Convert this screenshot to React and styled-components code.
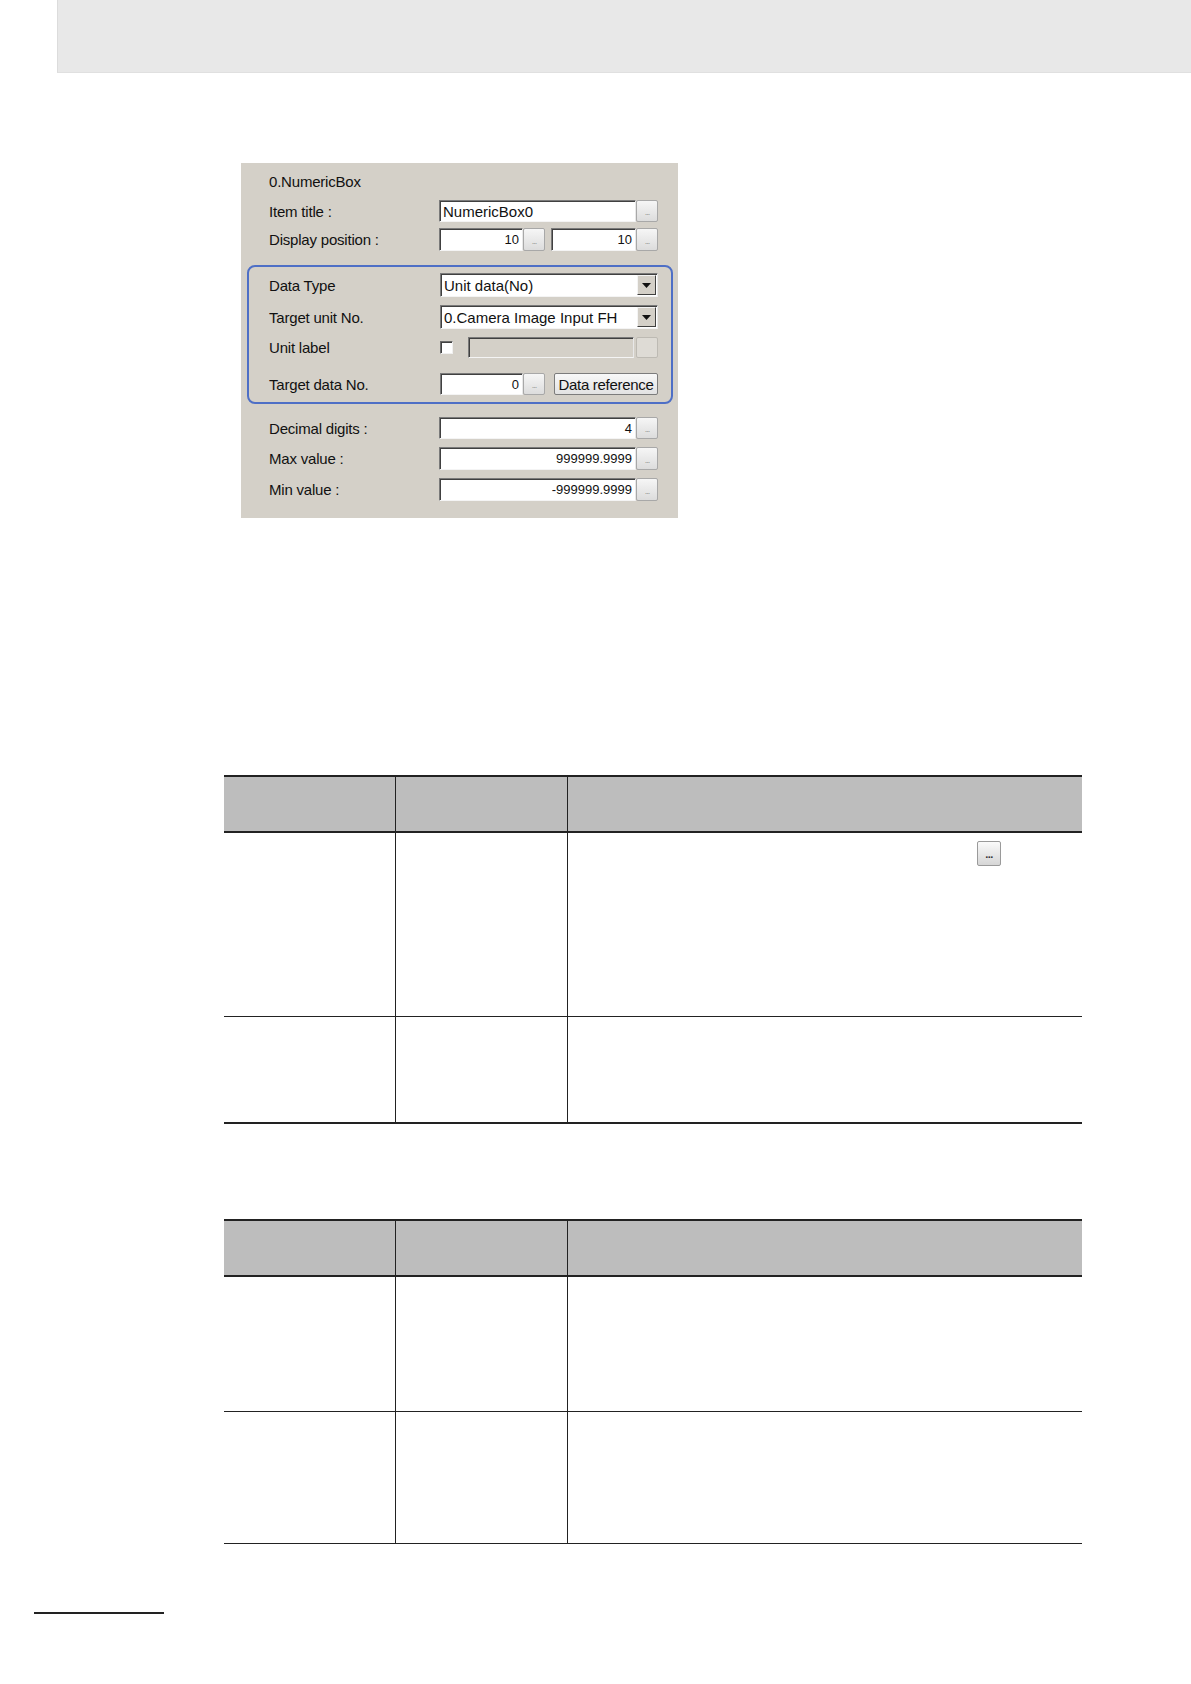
import styled, { createGlobalStyle } from 'styled-components';

const GlobalStyle = createGlobalStyle`
    html, body {
        margin: 0;
        padding: 0;
        background: #ffffff;
        font-family: 'Liberation Sans', Arial, sans-serif;
    }
`;

export default function App() {
    return (
        <>
            <GlobalStyle />
            <Page>
                <TopBand />

                <Panel>
                    <Row $h={22} $mt={0}>
                        <Label>0.NumericBox</Label>
                    </Row>
                    <Row $h={22} $mt={8}>
                        <Label>Item title :</Label>
                        <Controls>
                            <Field $grow>NumericBox0</Field>
                            <DotBtn />
                        </Controls>
                    </Row>
                    <Row $h={23} $mt={6}>
                        <Label>Display position :</Label>
                        <Controls>
                            <Field $w={84} $right $small>10</Field>
                            <DotBtn />
                            <Spacer $w={6} />
                            <Field $grow $right $small>10</Field>
                            <DotBtn />
                        </Controls>
                    </Row>

                    <Group>
                        <Row $h={24} $mt={0}>
                            <Label $w={171}>Data Type</Label>
                            <Select>
                                <span>Unit data(No)</span>
                                <Arrow />
                            </Select>
                        </Row>
                        <Row $h={24} $mt={8}>
                            <Label $w={171}>Target unit No.</Label>
                            <Select>
                                <span>0.Camera Image Input FH</span>
                                <Arrow />
                            </Select>
                        </Row>
                        <Row $h={21} $mt={8}>
                            <Label $w={171}>Unit label</Label>
                            <Controls>
                                <Check />
                                <Spacer $w={15} />
                                <Field $grow $disabled />
                                <Spacer $w={2} />
                                <GhostBtn />
                            </Controls>
                        </Row>
                        <Row $h={22} $mt={15}>
                            <Label $w={171}>Target data No.</Label>
                            <Controls>
                                <Field $w={83} $right $small>0</Field>
                                <DotBtn />
                                <Spacer $w={9} />
                                <PushBtn>Data reference</PushBtn>
                            </Controls>
                        </Row>
                    </Group>

                    <Row $h={22} $mt={13}>
                        <Label>Decimal digits :</Label>
                        <Controls>
                            <Field $grow $right $small>4</Field>
                            <DotBtn />
                        </Controls>
                    </Row>
                    <Row $h={23} $mt={8}>
                        <Label>Max value :</Label>
                        <Controls>
                            <Field $grow $right $small>999999.9999</Field>
                            <DotBtn />
                        </Controls>
                    </Row>
                    <Row $h={23} $mt={8}>
                        <Label>Min value :</Label>
                        <Controls>
                            <Field $grow $right $small>-999999.9999</Field>
                            <DotBtn />
                        </Controls>
                    </Row>
                </Panel>

                <Table $mt={257} $thickEnd>
                    <HeadRow>
                        <Cell />
                        <Cell />
                        <Cell />
                    </HeadRow>
                    <BodyRow $h={183}>
                        <Cell />
                        <Cell />
                        <Cell>
                            <InlineDots>...</InlineDots>
                        </Cell>
                    </BodyRow>
                    <BodyRow $h={105} $line>
                        <Cell />
                        <Cell />
                        <Cell />
                    </BodyRow>
                </Table>

                <Table $mt={95}>
                    <HeadRow>
                        <Cell />
                        <Cell />
                        <Cell />
                    </HeadRow>
                    <BodyRow $h={134}>
                        <Cell />
                        <Cell />
                        <Cell />
                    </BodyRow>
                    <BodyRow $h={131} $line>
                        <Cell />
                        <Cell />
                        <Cell />
                    </BodyRow>
                </Table>

                <FootRule />
            </Page>
        </>
    );
}

function DotBtn() {
    return <SmallBtn>...</SmallBtn>;
}

function Arrow() {
    return (
        <ArrowBtn>
            <svg width="9" height="5" viewBox="0 0 9 5">
                <path d="M0 0 H9 L4.5 5 Z" fill="#111" />
            </svg>
        </ArrowBtn>
    );
}

const Page = styled.div`
    width: 1191px;
    min-height: 1684px;
    overflow: hidden;
`;

const TopBand = styled.div`
    margin-left: 57px;
    height: 73px;
    background: #e8e8e8;
    border-left: 1px solid #dcdcdc;
    border-bottom: 1px solid #e0e0e0;
    box-sizing: border-box;
`;

const Panel = styled.div`
    margin: 90px 0 0 241px;
    width: 437px;
    box-sizing: border-box;
    padding: 7px 20px 17px 28px;
    background: #d4d0c8;
    font-size: 15px;
    color: #111;
`;

const Row = styled.div`
    display: flex;
    align-items: center;
    height: ${props => props.$h}px;
    margin-top: ${props => props.$mt}px;
`;

const Label = styled.div`
    width: ${props => props.$w || 170}px;
    flex-shrink: 0;
    white-space: nowrap;
    letter-spacing: -0.2px;
`;

const Controls = styled.div`
    display: flex;
    align-items: stretch;
    flex: 1;
    height: 100%;
`;

const Spacer = styled.div`
    width: ${props => props.$w}px;
    flex-shrink: 0;
`;

const Field = styled.div`
    box-sizing: border-box;
    ${props => props.$grow ? 'flex: 1;' : `width: ${props.$w}px; flex-shrink: 0;`}
    height: 100%;
    display: flex;
    align-items: center;
    justify-content: ${props => props.$right ? 'flex-end' : 'flex-start'};
    padding: 0 3px;
    background: ${props => props.$disabled ? '#d4d0c8' : '#ffffff'};
    border-top: 1px solid #7a7a7a;
    border-left: 1px solid #7a7a7a;
    border-bottom: 1px solid #f4f4f4;
    border-right: 1px solid #e8e8e8;
    box-shadow: inset 1px 1px 0 #404040;
    font-size: ${props => props.$small ? '13px' : '15px'};
    white-space: nowrap;
`;

const SmallBtn = styled.div`
    box-sizing: border-box;
    width: 22px;
    flex-shrink: 0;
    height: 100%;
    border: 1px solid #a8a8a8;
    border-radius: 2px;
    background: linear-gradient(#f6f6f6, #dcdcdc);
    color: #9a9a9a;
    font-size: 9px;
    line-height: 1;
    display: flex;
    align-items: center;
    justify-content: center;
    padding-top: 3px;
    letter-spacing: -1px;
`;

const GhostBtn = styled.div`
    box-sizing: border-box;
    width: 22px;
    flex-shrink: 0;
    height: 100%;
    border: 1px solid #bdbab3;
    border-radius: 2px;
    background: #dedbd5;
`;

const PushBtn = styled.div`
    box-sizing: border-box;
    width: 104px;
    flex-shrink: 0;
    height: 100%;
    border: 1px solid #7c7c7c;
    border-radius: 2px;
    background: linear-gradient(#f8f8f8, #e2e2e2);
    display: flex;
    align-items: center;
    justify-content: center;
    font-size: 15px;
    white-space: nowrap;
    letter-spacing: -0.3px;
`;

const Select = styled.div`
    box-sizing: border-box;
    flex: 1;
    height: 100%;
    display: flex;
    align-items: center;
    justify-content: space-between;
    padding: 1px 1px 1px 3px;
    background: #ffffff;
    border-top: 1px solid #7a7a7a;
    border-left: 1px solid #7a7a7a;
    border-bottom: 1px solid #f4f4f4;
    border-right: 1px solid #e8e8e8;
    box-shadow: inset 1px 1px 0 #404040;
    font-size: 15px;
    white-space: nowrap;
`;

const ArrowBtn = styled.div`
    box-sizing: border-box;
    width: 19px;
    height: 100%;
    display: flex;
    align-items: center;
    justify-content: center;
    background: #d4d0c8;
    border-top: 1px solid #f4f4f4;
    border-left: 1px solid #f4f4f4;
    border-right: 1px solid #404040;
    border-bottom: 1px solid #404040;
`;

const Check = styled.div`
    box-sizing: border-box;
    width: 13px;
    height: 13px;
    align-self: center;
    background: #ffffff;
    border-top: 1px solid #6a6a6a;
    border-left: 1px solid #6a6a6a;
    border-bottom: 1px solid #f0f0f0;
    border-right: 1px solid #f0f0f0;
    box-shadow: inset 1px 1px 0 #404040;
`;

const Group = styled.div`
    margin: 14px 0 0 -22px;
    width: 426px;
    box-sizing: border-box;
    padding: 6px 13px 7px 20px;
    border: 2px solid #4e6fc6;
    border-radius: 8px;
`;

const Table = styled.div`
    margin: ${props => props.$mt}px 0 0 224px;
    width: 858px;
    border-top: 2px solid #222222;
    border-bottom: ${props => props.$thickEnd ? '2px' : '1px'} solid #222222;
`;

const HeadRow = styled.div`
    display: grid;
    grid-template-columns: 171px 172px 1fr;
    height: 54px;
    background: #bdbdbd;
    border-bottom: 2px solid #222222;
`;

const BodyRow = styled.div`
    display: grid;
    grid-template-columns: 171px 172px 1fr;
    height: ${props => props.$h}px;
    border-top: ${props => props.$line ? '1px solid #222222' : 'none'};
`;

const Cell = styled.div`
    position: relative;
    & + & {
        border-left: 1px solid #222222;
    }
`;

const InlineDots = styled.div`
    position: absolute;
    left: 409px;
    top: 8px;
    box-sizing: border-box;
    width: 24px;
    height: 25px;
    border: 1px solid #9a9a9a;
    border-radius: 2px;
    background: linear-gradient(#fafafa, #d6d6d6);
    color: #333;
    font-size: 11px;
    font-weight: bold;
    display: flex;
    align-items: center;
    justify-content: center;
    letter-spacing: -0.5px;
`;

const FootRule = styled.div`
    margin: 68px 0 0 34px;
    width: 130px;
    height: 2px;
    background: #222222;
`;
